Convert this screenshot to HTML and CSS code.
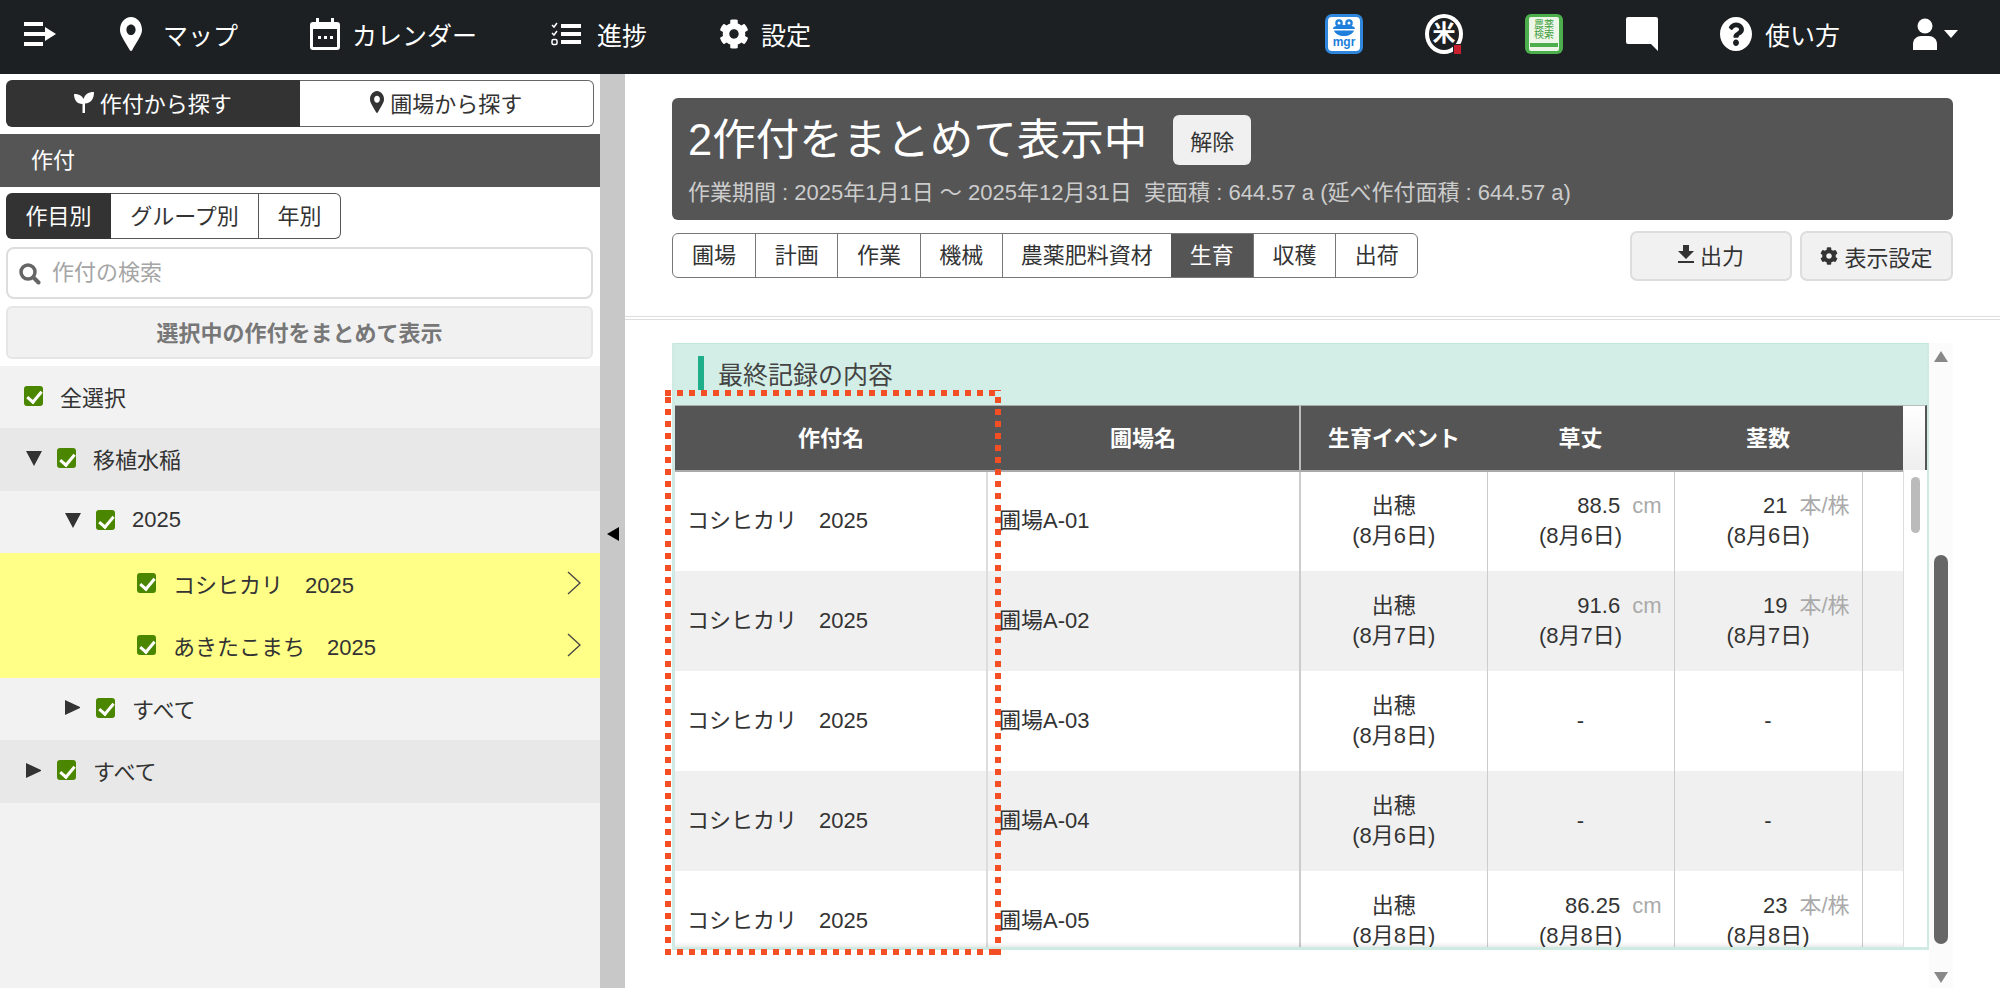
FILE: index.html
```html
<!DOCTYPE html>
<html lang="ja">
<head>
    <meta charset="UTF-8">
    <title>生育</title>
    <link rel="stylesheet" href="styles.css">
</head>
<body>
    <header class="topbar">
        <a class="nav-item nav-menu">
            <svg width="32" height="26" viewBox="0 0 32 26"><path fill="#fff" d="M0 1h19v4H0zM0 11h21v4H0zM0 21h19v4H0z"/><path fill="#fff" d="M21 6l11 7-11 7z"/></svg>
        </a>
        <a class="nav-item nav-map">
            <svg class="nav-icon" width="22" height="34" viewBox="0 0 384 512" preserveAspectRatio="none"><path fill="#fff" d="M172.268 501.67C26.97 291.031 0 256.281 0 192 0 85.961 85.961 0 192 0s192 85.961 192 192c0 64.281-26.97 99.031-172.268 309.67-9.535 13.774-29.93 13.773-39.464 0zM192 272c44.183 0 80-35.817 80-80s-35.817-80-80-80-80 35.817-80 80 35.817 80 80 80z"/></svg>
            マップ
        </a>
        <a class="nav-item nav-cal">
            <svg class="nav-icon" width="30" height="32" viewBox="0 0 30 32"><path fill="#fff" d="M6 0h3v4h12V0h3v4h3a3 3 0 0 1 3 3v22a3 3 0 0 1-3 3H3a3 3 0 0 1-3-3V7a3 3 0 0 1 3-3h3zM3 11v18h24V11z"/><path fill="#fff" d="M8 18h3v3H8zM14 18h3v3h-3zM20 18h3v3h-3z"/></svg>
            カレンダー
        </a>
        <a class="nav-item nav-progress">
            <svg class="nav-icon" width="30" height="24" viewBox="0 0 30 24"><path fill="#fff" d="M10 2h20v4H10zM10 10h20v4H10zM10 18h20v4H10z"/><path fill="none" stroke="#fff" stroke-width="1.5" d="M1 3l2 2 3-4M1 11l2 2 3-4"/><rect x="1" y="17.5" width="5" height="5" rx="1.5" fill="none" stroke="#fff" stroke-width="1.5"/></svg>
            進捗
        </a>
        <a class="nav-item nav-setting">
            <svg class="nav-icon" width="30" height="30" viewBox="0 0 512 512"><path fill="#fff" d="M487.4 315.7l-42.6-24.6c4.3-23.2 4.3-47 0-70.2l42.6-24.6c4.9-2.8 7.1-8.6 5.5-14-11.1-35.6-30-67.8-54.7-94.6-3.8-4.1-10-5.1-14.8-2.3L380.8 110c-17.9-15.4-38.5-27.3-60.8-35.1V25.8c0-5.6-3.9-10.5-9.4-11.7-36.7-8.2-74.3-7.8-109.2 0-5.5 1.2-9.4 6.1-9.4 11.7V75c-22.2 7.9-42.8 19.8-60.8 35.1L88.7 85.5c-4.9-2.8-11-1.9-14.8 2.3-24.7 26.7-43.6 58.9-54.7 94.6-1.7 5.4.6 11.2 5.5 14L67.3 221c-4.3 23.2-4.3 47 0 70.2l-42.6 24.6c-4.9 2.8-7.1 8.6-5.5 14 11.1 35.6 30 67.8 54.7 94.6 3.8 4.1 10 5.1 14.8 2.3l42.6-24.6c17.9 15.4 38.5 27.3 60.8 35.1v49.2c0 5.6 3.9 10.5 9.4 11.7 36.7 8.2 74.3 7.8 109.2 0 5.5-1.2 9.4-6.1 9.4-11.7v-49.2c22.2-7.9 42.8-19.8 60.8-35.1l42.6 24.6c4.9 2.8 11 1.9 14.8-2.3 24.7-26.7 43.6-58.9 54.7-94.6 1.5-5.5-.7-11.3-5.6-14.1zM256 336c-44.1 0-80-35.9-80-80s35.9-80 80-80 80 35.9 80 80-35.9 80-80 80z"/></svg>
            設定
        </a>

        <div class="topbar-right">
            <a class="app-icon app-mgr">
                <svg width="24" height="17" viewBox="0 0 24 17"><circle cx="7" cy="4" r="3.8" fill="#1e7fdc"/><circle cx="17" cy="4" r="3.8" fill="#1e7fdc"/><circle cx="7" cy="4" r="1.5" fill="#fff"/><circle cx="17" cy="4" r="1.5" fill="#fff"/><path fill="#1e7fdc" d="M1 10c0-3 5-4 11-4s11 1 11 4H1zM2 11.500h20C21 15 16.500 17 12 17s-9-2-10-5.500z"/></svg>
                <span>mgr</span>
            </a>
            <a class="app-icon app-rice">
                <span>米</span>
                <i class="rice-badge"></i>
            </a>
            <a class="app-icon app-book">
                <span class="book-page">農薬<br>検索<i class="book-bar"></i></span>
            </a>
            <a class="nav-item nav-comment">
                <svg width="32" height="34" viewBox="0 0 32 34"><path fill="#fff" d="M2 0h28a2 2 0 0 1 2 2v32l-7-7H2a2 2 0 0 1-2-2V2a2 2 0 0 1 2-2z"/></svg>
            </a>
            <a class="nav-item nav-help">
                <svg class="nav-icon" width="32" height="34" viewBox="8 8 496 496" preserveAspectRatio="none"><path fill="#fff" d="M504 256c0 136.997-111.043 248-248 248S8 392.997 8 256C8 119.083 119.043 8 256 8s248 111.083 248 248zM262.655 90c-54.497 0-89.255 22.957-116.549 63.758-3.536 5.286-2.353 12.415 2.715 16.258l34.699 26.31c5.205 3.947 12.621 3.008 16.665-2.122 17.864-22.658 30.113-35.797 57.303-35.797 20.429 0 45.698 13.148 45.698 32.958 0 14.976-12.363 22.667-32.534 33.976C247.128 238.528 216 254.941 216 296v4c0 6.627 5.373 12 12 12h56c6.627 0 12-5.373 12-12v-1.333c0-28.462 83.186-29.647 83.186-106.667 0-58.002-60.165-102-116.531-102zM256 338c-25.365 0-46 20.635-46 46 0 25.364 20.635 46 46 46s46-20.636 46-46c0-25.365-20.635-46-46-46z"/></svg>
                使い方
            </a>
            <a class="nav-item nav-user">
                <svg width="24" height="32" viewBox="0 0 24 32"><circle cx="12" cy="8" r="7.500" fill="#fff"/><path fill="#fff" d="M0 32v-6c0-5 4-8 8-8h8c4 0 8 3 8 8v6z"/></svg>
                <i class="user-caret"></i>
            </a>
        </div>
    </header>

    <div class="page">
        <aside class="sidebar">
            <div class="search-tabs">
                <a class="search-tab active">
                    <svg width="20" height="22" viewBox="0 0 20 22"><path fill="#fff" d="M8.500 22V13C3 13 0 9 0 3c5 0 8 1.500 9.500 5C11 3.500 14 1 20 1c0 7-3 11-9 11.500V22z"/></svg>
                    作付から探す
                </a>
                <a class="search-tab">
                    <svg width="14" height="22" viewBox="0 0 384 512" preserveAspectRatio="none"><path fill="#333" d="M172.268 501.67C26.97 291.031 0 256.281 0 192 0 85.961 85.961 0 192 0s192 85.961 192 192c0 64.281-26.97 99.031-172.268 309.67-9.535 13.774-29.93 13.773-39.464 0zM192 272c44.183 0 80-35.817 80-80s-35.817-80-80-80-80 35.817-80 80 35.817 80 80 80z"/></svg>
                    圃場から探す
                </a>
            </div>

            <div class="side-title">作付</div>

            <div class="side-form">
                <div class="group-tabs">
                    <a class="group-tab tab-item active">作目別</a>
                    <a class="group-tab tab-group">グループ別</a>
                    <a class="group-tab tab-year">年別</a>
                </div>

                <div class="side-search">
                    <svg width="22" height="22" viewBox="0 0 22 22"><circle cx="9" cy="9" r="7" fill="none" stroke="#666" stroke-width="3.500"/><path stroke="#666" stroke-width="4" stroke-linecap="round" d="M14.500 14.500l5 5"/></svg>
                    <input class="side-input" type="text" placeholder="作付の検索">
                </div>

                <button class="bulk-btn" type="button">選択中の作付をまとめて表示</button>
            </div>

            <ul class="tree">
                <li class="tree-row row-all"><span class="check"></span>全選択</li>
                <li class="tree-row row-group lv0"><i class="tri tri-down"></i><span class="check"></span>移植水稲</li>
                <li class="tree-row lv1"><i class="tri tri-down"></i><span class="check"></span>2025</li>
                <li class="tree-row selected lv2"><span class="check"></span>コシヒカリ　2025<svg class="chev" width="14" height="24" viewBox="0 0 14 24"><path fill="none" stroke="#444" stroke-width="1.300" d="M1 1l12 11L1 23"/></svg></li>
                <li class="tree-row selected lv2"><span class="check"></span>あきたこまち　2025<svg class="chev" width="14" height="24" viewBox="0 0 14 24"><path fill="none" stroke="#444" stroke-width="1.300" d="M1 1l12 11L1 23"/></svg></li>
                <li class="tree-row lv1"><i class="tri tri-right"></i><span class="check"></span>すべて</li>
                <li class="tree-row row-group lv0"><i class="tri tri-right"></i><span class="check"></span>すべて</li>
            </ul>
        </aside>

        <div class="splitter"><i class="splitter-arrow"></i></div>

        <main class="content">
            <section class="summary">
                <div class="summary-head">
                    <h1>2作付をまとめて表示中</h1>
                    <button class="clear-btn" type="button">解除</button>
                </div>
                <p>作業期間 : 2025年1月1日 ～ 2025年12月31日&nbsp;&nbsp;実面積 : 644.57 a (延べ作付面積 : 644.57 a)</p>
            </section>

            <div class="toolbar">
                <div class="view-tabs">
                    <a class="view-tab">圃場</a>
                    <a class="view-tab">計画</a>
                    <a class="view-tab">作業</a>
                    <a class="view-tab">機械</a>
                    <a class="view-tab view-wide">農薬肥料資材</a>
                    <a class="view-tab active">生育</a>
                    <a class="view-tab">収穫</a>
                    <a class="view-tab">出荷</a>
                </div>
                <button class="tool-btn btn-output" type="button">
                    <svg width="16" height="18" viewBox="0 0 16 18"><path fill="#333" d="M5 0h6v6h5l-8 8-8-8h5zM0 16h16v2H0z"/></svg>
                    出力
                </button>
                <button class="tool-btn btn-setting" type="button">
                    <svg width="18" height="18" viewBox="0 0 512 512"><path fill="#333" d="M487.4 315.7l-42.6-24.6c4.3-23.2 4.3-47 0-70.2l42.6-24.6c4.9-2.8 7.1-8.6 5.5-14-11.1-35.6-30-67.8-54.7-94.6-3.8-4.1-10-5.1-14.8-2.3L380.8 110c-17.9-15.4-38.5-27.3-60.8-35.1V25.8c0-5.6-3.9-10.5-9.4-11.7-36.7-8.2-74.3-7.8-109.2 0-5.5 1.2-9.4 6.1-9.4 11.7V75c-22.2 7.9-42.8 19.8-60.8 35.1L88.7 85.5c-4.9-2.8-11-1.9-14.8 2.3-24.7 26.7-43.6 58.9-54.7 94.6-1.7 5.4.6 11.2 5.5 14L67.3 221c-4.3 23.2-4.3 47 0 70.2l-42.6 24.6c-4.9 2.8-7.1 8.6-5.5 14 11.1 35.6 30 67.8 54.7 94.6 3.8 4.1 10 5.1 14.8 2.3l42.6-24.6c17.9 15.4 38.5 27.3 60.8 35.1v49.2c0 5.6 3.9 10.5 9.4 11.7 36.7 8.2 74.3 7.8 109.2 0 5.5-1.2 9.4-6.1 9.4-11.7v-49.2c22.2-7.9 42.8-19.8 60.8-35.1l42.6 24.6c4.9 2.8 11 1.9 14.8-2.3 24.7-26.7 43.6-58.9 54.7-94.6 1.5-5.5-.7-11.3-5.6-14.1zM256 336c-44.1 0-80-35.9-80-80s35.9-80 80-80 80 35.9 80 80-35.9 80-80 80z"/></svg>
                    表示設定
                </button>
            </div>

            <div class="record">
                <div class="record-main">
                    <h2 class="record-title">最終記録の内容</h2>
                    <div class="table-wrap">
                        <div class="table-box">
                            <table class="growth">
                                <colgroup>
                                    <col class="col-crop"><col class="col-field"><col class="col-event"><col class="col-height"><col class="col-stem"><col class="col-rest">
                                </colgroup>
                                <thead>
                                    <tr>
                                        <th>作付名</th>
                                        <th class="th-line">圃場名</th>
                                        <th>生育イベント</th>
                                        <th>草丈</th>
                                        <th>茎数</th>
                                        <th></th>
                                    </tr>
                                </thead>
                                <tbody>
                                    <tr>
                                        <td class="td-crop">コシヒカリ　2025</td>
                                        <td class="td-field">圃場A-01</td>
                                        <td>出穂<br>(8月6日)</td>
                                        <td><div class="val">88.5<span class="unit">cm</span></div>(8月6日)</td>
                                        <td><div class="val">21<span class="unit">本/株</span></div>(8月6日)</td>
                                        <td></td>
                                    </tr>
                                    <tr>
                                        <td class="td-crop">コシヒカリ　2025</td>
                                        <td class="td-field">圃場A-02</td>
                                        <td>出穂<br>(8月7日)</td>
                                        <td><div class="val">91.6<span class="unit">cm</span></div>(8月7日)</td>
                                        <td><div class="val">19<span class="unit">本/株</span></div>(8月7日)</td>
                                        <td></td>
                                    </tr>
                                    <tr>
                                        <td class="td-crop">コシヒカリ　2025</td>
                                        <td class="td-field">圃場A-03</td>
                                        <td>出穂<br>(8月8日)</td>
                                        <td>-</td>
                                        <td>-</td>
                                        <td></td>
                                    </tr>
                                    <tr>
                                        <td class="td-crop">コシヒカリ　2025</td>
                                        <td class="td-field">圃場A-04</td>
                                        <td>出穂<br>(8月6日)</td>
                                        <td>-</td>
                                        <td>-</td>
                                        <td></td>
                                    </tr>
                                    <tr>
                                        <td class="td-crop">コシヒカリ　2025</td>
                                        <td class="td-field">圃場A-05</td>
                                        <td>出穂<br>(8月8日)</td>
                                        <td><div class="val">86.25<span class="unit">cm</span></div>(8月8日)</td>
                                        <td><div class="val">23<span class="unit">本/株</span></div>(8月8日)</td>
                                        <td></td>
                                    </tr>
                                </tbody>
                            </table>
                        </div>
                        <div class="inner-scroll">
                            <div class="inner-corner"></div>
                            <div class="inner-thumb"></div>
                        </div>
                    </div>
                </div>
                <div class="outer-scroll">
                    <i class="scroll-up"></i>
                    <div class="outer-thumb"></div>
                    <i class="scroll-down"></i>
                </div>
            </div>

            <!-- 赤い点線の枠 -->
            <div class="dot-frame"></div>
        </main>
    </div>
</body>
</html>
```

FILE: styles.css
```css
* {
    margin: 0;
    padding: 0;
    box-sizing: border-box;
}
html, body {
    height: 988px;
    overflow: hidden;
}
body {
    font-family: "Liberation Sans", "Noto Sans CJK JP", sans-serif;
    font-size: 22px;
    color: #333;
    background: #fff;
}
ul {
    list-style: none;
}
i {
    display: block;
}
button {
    font-family: inherit;
    cursor: pointer;
}


/* ヘッダー */
.topbar {
    display: flex;
    align-items: center;
    height: 74px;
    background-color: #1c2023;
    color: #fff;
    font-size: 25px;
    padding: 0 0 6px 24px;
}
.nav-item {
    display: flex;
    align-items: center;
    white-space: nowrap;
}
.nav-map {
    margin-left: 64px;
}
.nav-map .nav-icon {
    margin-right: 21px;
}
.nav-cal {
    margin-left: 72px;
}
.nav-cal .nav-icon {
    margin-right: 12px;
}
.nav-progress {
    margin-left: 74px;
}
.nav-progress .nav-icon {
    margin-right: 16px;
}
.nav-setting {
    margin-left: 72px;
}
.nav-setting .nav-icon {
    margin-right: 12px;
}
.topbar-right {
    display: flex;
    align-items: center;
    margin-left: auto;
    padding-right: 42px;
}
.app-icon {
    position: relative;
    display: block;
    width: 38px;
    height: 40px;
}
.app-mgr {
    background: #fff;
    border: 3px solid #2f86dd;
    border-radius: 7px;
    display: flex;
    flex-direction: column;
    align-items: center;
    padding-top: 2px;
    color: #1e7fdc;
    font-size: 12px;
    font-weight: bold;
    line-height: 13px;
}
.app-rice {
    margin-left: 62px;
    border: 4px solid #fff;
    border-radius: 50%;
    text-align: center;
    font-size: 23px;
    line-height: 31px;
    font-weight: bold;
}
.rice-badge {
    position: absolute;
    right: -3px;
    bottom: -5px;
    width: 9px;
    height: 11px;
    background: #c8202c;
    border: 1px solid #1c2023;
}
.app-book {
    margin-left: 62px;
    background: #4cae4c;
    border-radius: 6px;
    padding: 3px 4px;
}
.book-page {
    display: block;
    height: 34px;
    background: #eef6e8;
    border-radius: 2px;
    color: #3f9f3f;
    font-size: 10px;
    line-height: 10px;
    text-align: center;
    padding-top: 3px;
}
.book-bar {
    height: 4px;
    margin: 3px 1px 0;
    background: #4cae4c;
}
.nav-comment {
    margin-left: 63px;
}
.nav-help {
    margin-left: 62px;
}
.nav-help .nav-icon {
    margin-right: 13px;
}
.nav-user {
    margin-left: 73px;
}
.user-caret {
    margin-left: 7px;
    border-left: 7.5px solid transparent;
    border-right: 7.5px solid transparent;
    border-top: 8px solid #fff;
}


.page {
    display: flex;
    height: 914px;
}


/* サイドバー */
.sidebar {
    width: 600px;
    background: #f2f2f2;
}
.search-tabs {
    display: flex;
    height: 60px;
    padding: 6px 6px 7px;
    background: #fff;
}
.search-tab {
    display: flex;
    flex: 1;
    align-items: center;
    justify-content: center;
    gap: 6px;
    padding-bottom: 3px;
    background: #fff;
    border: 1px solid #666;
    border-left: 0;
    border-radius: 0 6px 6px 0;
}
.search-tab.active {
    background: #333;
    color: #fff;
    border: 0;
    border-radius: 6px 0 0 6px;
}
.side-title {
    height: 53px;
    line-height: 53px;
    padding-left: 31px;
    background: #555;
    color: #fff;
}
.side-form {
    display: flex;
    flex-direction: column;
    gap: 8px;
    height: 179px;
    padding: 6px 7px 0 6px;
    background: #fff;
}
.group-tabs {
    display: flex;
    height: 46px;
}
.group-tab {
    display: block;
    line-height: 45px;
    text-align: center;
    border: 1px solid #555;
    border-left: 0;
}
.tab-item {
    width: 105px;
}
.tab-group {
    width: 148px;
}
.tab-year {
    width: 82px;
    border-radius: 0 6px 6px 0;
}
.group-tab.active {
    background: #333;
    color: #fff;
    border-radius: 6px 0 0 6px;
    border: 0;
    line-height: 47px;
}
.side-search {
    position: relative;
    height: 52px;
}
.side-search svg {
    position: absolute;
    left: 13px;
    top: 16px;
}
.side-input {
    width: 100%;
    height: 52px;
    padding-left: 44px;
    border: 2px solid #ddd;
    border-radius: 8px;
    font-family: inherit;
    font-size: 22px;
    background: #fff;
    outline: none;
}
.side-input::placeholder {
    color: #a5a5a5;
    opacity: 1;
}
.bulk-btn {
    display: block;
    height: 53px;
    margin-top: -1px;
    padding-bottom: 3px;
    background: #f1f1f1;
    border: 2px solid #e6e6e6;
    border-radius: 6px;
    color: #777;
    font-size: 22px;
    font-weight: bold;
}
.tree-row {
    display: flex;
    align-items: center;
    height: 62.4px;
    padding-bottom: 3px;
}
.row-all {
    padding-left: 24px;
}
.row-group {
    background: #e8e8e8;
}
.lv0 {
    padding-left: 26px;
}
.lv1 {
    padding-left: 65px;
}
.lv2 {
    padding-left: 137px;
}
.selected {
    background: #ffff88;
}
.tri {
    width: 16px;
    height: 15px;
    margin-right: 15px;
}
.tri-down {
    border-left: 8px solid transparent;
    border-right: 8px solid transparent;
    border-top: 15px solid #333;
}
.tri-right {
    border-top: 7.5px solid transparent;
    border-bottom: 7.5px solid transparent;
    border-left: 15px solid #333;
}
.check {
    position: relative;
    flex: none;
    width: 19px;
    height: 20px;
    margin-right: 17px;
    background: #4a8600;
    border-radius: 3px;
}
.check::after {
    content: "";
    position: absolute;
    left: 6px;
    top: 2.5px;
    width: 6px;
    height: 12px;
    border-right: 3px solid #fff;
    border-bottom: 3px solid #fff;
    transform: rotate(40deg);
}
.chev {
    margin-left: auto;
    margin-right: 19px;
}


/* 仕切り */
.splitter {
    display: flex;
    align-items: flex-start;
    justify-content: center;
    width: 25px;
    padding-top: 453px;
    background: #c8c8c8;
}
.splitter-arrow {
    border-top: 7px solid transparent;
    border-bottom: 7px solid transparent;
    border-right: 12px solid #000;
}


/* メイン */
.content {
    position: relative;
    flex: 1;
    padding-top: 24px;
    background: #fff;
}
.summary {
    height: 122px;
    margin: 0 47px;
    padding: 16px 16px 0;
    background: #555;
    border-radius: 6px;
    color: #fff;
}
.summary-head {
    display: flex;
    align-items: center;
}
.summary h1 {
    font-size: 43.5px;
    font-weight: normal;
    line-height: 52px;
}
.clear-btn {
    width: 78px;
    height: 50px;
    margin-left: 26px;
    background: #f0f0f0;
    border: 0;
    border-radius: 6px;
    color: #333;
    font-size: 22px;
}
.summary p {
    margin-top: 12px;
    color: #ccc;
    font-size: 22px;
    line-height: 30px;
}
.toolbar {
    display: flex;
    align-items: flex-start;
    height: 87px;
    margin-top: 13px;
    padding: 0 47px;
    border-bottom: 4px double #ddd;
}
.view-tabs {
    display: flex;
    height: 45px;
    margin-right: auto;
    border: 1px solid #777;
    border-radius: 6px;
    overflow: hidden;
}
.view-tab {
    display: block;
    width: 82.2px;
    line-height: 43px;
    text-align: center;
    border-left: 1px solid #777;
}
.view-tab:first-child {
    border-left: 0;
}
.view-tab.view-wide {
    width: 169px;
}
.view-tab.active {
    background: #555;
    color: #fff;
    border-left: 0;
}
.tool-btn {
    display: flex;
    align-items: center;
    justify-content: center;
    gap: 6px;
    height: 50px;
    margin-top: -2px;
    background: #f1f1f1;
    border: 2px solid #ddd;
    border-radius: 7px;
    color: #333;
    font-size: 22px;
}
.btn-output {
    width: 162px;
    padding-bottom: 4px;
}
.btn-setting {
    width: 153px;
    margin-left: 8px;
}
.record {
    display: flex;
    height: 668px;
    margin: 0 47px;
}
.record-main {
    width: 1257px;
    height: 607px;
    margin-top: 23px;
    border: solid #cfeae2;
    border-width: 0 2px 3px 3px;
    overflow: hidden;
}
.record-title {
    display: flex;
    align-items: center;
    height: 62px;
    margin: 0 -2px 0 -3px;
    padding: 0 0 3px 47px;
    background: #d3eee6;
    border: 1px solid #bfe8db;
    border-bottom: 0;
    color: #444;
    font-size: 25px;
    font-weight: normal;
}
.record-title::before {
    content: "";
    width: 6px;
    height: 34px;
    margin-left: -22px;
    margin-right: 14px;
    background: #1fae8a;
}
.table-wrap {
    display: flex;
    height: 542px;
}
.table-box {
    position: relative;
    width: 1228px;
    overflow: hidden;
}
.table-box::after {
    content: "";
    position: absolute;
    left: 0;
    right: 0;
    bottom: 0;
    height: 5px;
    background: linear-gradient(rgba(0,0,0,0), rgba(0,0,0,.08));
}
.growth {
    width: 1228px;
    table-layout: fixed;
    border-collapse: collapse;
}
.col-crop { width: 312px; }
.col-field { width: 313px; }
.col-event { width: 187px; }
.col-height { width: 187px; }
.col-stem { width: 188px; }
.col-rest { width: 41px; }
.growth th {
    height: 65px;
    padding-bottom: 4px;
    background: #555;
    color: #fff;
    font-size: 22px;
    font-weight: bold;
    border-top: 1px solid #aaa;
    border-bottom: 2px solid #aaa;
}
.growth th.th-line {
    border-right: 2px solid #bbb;
}
.growth td {
    height: 100px;
    padding: 0;
    text-align: center;
    line-height: 30px;
    border-left: 1px solid #ccc;
    background: #fff;
}
.growth td:first-child {
    border-left: 0;
}
.growth td:nth-child(2) {
    border-left: 2px solid #ddd;
}
.growth td:nth-child(3) {
    border-left: 2px solid #ccc;
}
.growth tbody tr:nth-child(even) td {
    background: #f0f0f0;
}
.growth td.td-crop {
    text-align: left;
    padding-left: 12px;
}
.growth td.td-field {
    text-align: left;
    padding-left: 11px;
}
.val {
    text-align: right;
    padding-right: 12px;
}
.unit {
    margin-left: 12px;
    color: #aaa;
}
.inner-scroll {
    width: 24px;
    background: #fff;
    border-left: 1px solid #ddd;
}
.inner-corner {
    height: 65px;
    margin-left: -1px;
    background: linear-gradient(#fff, #eee);
    border-top: 1px solid #bbb;
    border-right: 2px solid #555;
}
.inner-thumb {
    width: 9px;
    height: 56px;
    margin: 7px 0 0 7px;
    background: #bbb;
    border-radius: 5px;
}
.outer-scroll {
    display: flex;
    flex-direction: column;
    align-items: center;
    width: 24px;
    margin-top: 23px;
    padding-top: 8px;
    background: #fbfbfb;
}
.scroll-up {
    border-left: 7.5px solid transparent;
    border-right: 7.5px solid transparent;
    border-bottom: 11px solid #888;
}
.outer-thumb {
    flex: none;
    width: 14px;
    height: 389px;
    margin-top: 193px;
    background: #666;
    border-radius: 7px;
}
.scroll-down {
    margin-top: 28px;
    border-left: 7.5px solid transparent;
    border-right: 7.5px solid transparent;
    border-top: 11px solid #888;
}


/* 赤い点線（注釈） */
.dot-frame {
    position: absolute;
    left: 40px;
    top: 316px;
    width: 336px;
    height: 565px;
    background:
        repeating-linear-gradient(90deg, #f44f24 0 6px, transparent 6px 12px) left top / 100% 6px no-repeat,
        repeating-linear-gradient(90deg, #f44f24 0 6px, transparent 6px 12px) left bottom / 100% 6px no-repeat,
        repeating-linear-gradient(0deg, #f44f24 0 6px, transparent 6px 12px) left top / 6px 100% no-repeat,
        repeating-linear-gradient(0deg, #f44f24 0 6px, transparent 6px 12px) right top / 6px 100% no-repeat;
}
```
